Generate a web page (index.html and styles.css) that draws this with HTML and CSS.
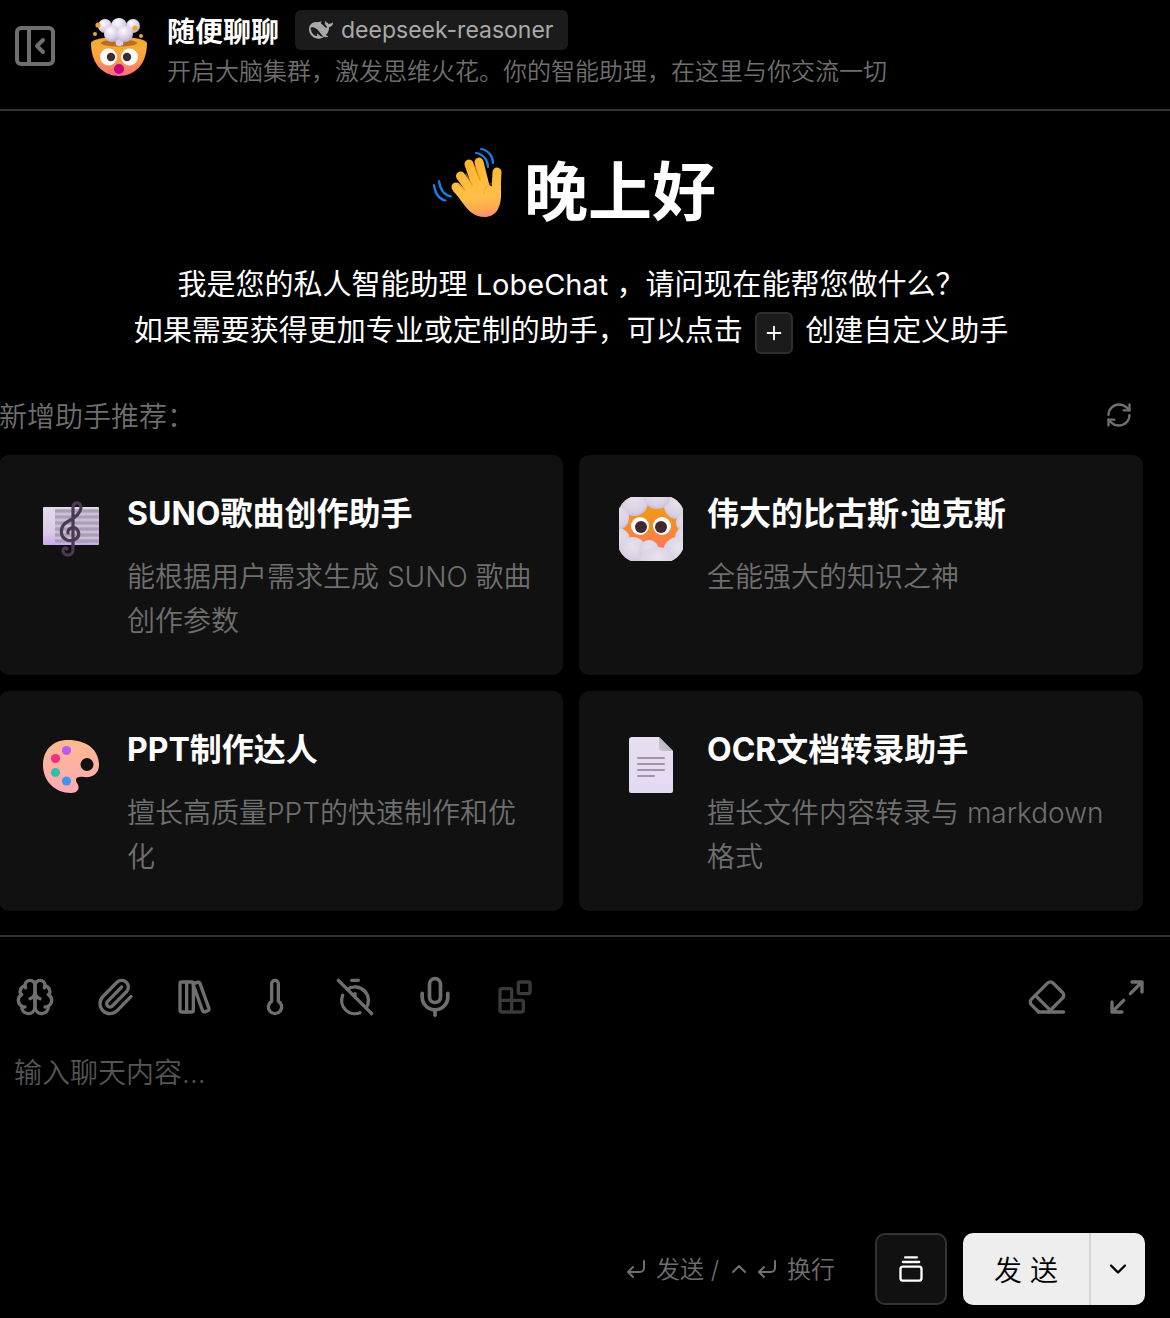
FILE: index.html
```html
<!DOCTYPE html>
<html lang="zh-CN">
<head>
<meta charset="utf-8">
<meta name="viewport" content="width=device-width, initial-scale=1">
<title>随便聊聊 - LobeChat</title>
<link rel="stylesheet" href="styles.css">
</head>
<body>
<div class="app">
  <header class="topbar">
    <button class="icon-btn topbar-toggle" type="button" aria-label="收起侧边栏">
      <svg class="icon icon-xl" viewBox="0 0 24 24"><rect x="3" y="3" width="18" height="18" rx="2"/><path d="M9 3v18"/><path d="m16 15-3-3 3-3"/></svg>
    </button>
    <svg class="topbar-avatar" viewBox="0 0 60 60" aria-hidden="true">
      <defs>
        <linearGradient id="face" x1="0" y1="0" x2="0" y2="1"><stop offset="0" stop-color="#f6b23c"/><stop offset=".5" stop-color="#ff9d3d"/><stop offset="1" stop-color="#fb6a8c"/></linearGradient>
        <radialGradient id="puff" cx=".4" cy=".3" r=".75"><stop offset="0" stop-color="#fdfbff"/><stop offset=".6" stop-color="#dcd2e6"/><stop offset="1" stop-color="#b7a3c6"/></radialGradient>
      </defs>
      <path d="M2 26c0 21 12 33 28 33s28-12 28-33z" fill="url(#face)"/>
      <ellipse cx="30" cy="26" rx="28" ry="6" fill="#f0ab35"/>
      <ellipse cx="30" cy="26" rx="18" ry="3.500" fill="#b76d27"/>
      <path d="M25 15h11l-2 13q-4 2-7 0z" fill="#dccfe3"/>
      <circle cx="16" cy="9" r="7" fill="url(#puff)"/><circle cx="44" cy="9" r="7" fill="url(#puff)"/><circle cx="30" cy="9" r="8" fill="url(#puff)"/><circle cx="23" cy="17" r="8" fill="url(#puff)"/><circle cx="36" cy="17" r="8" fill="url(#puff)"/>
      <g fill="#f3a42f"><circle cx="9" cy="8" r="2.600"/><circle cx="6" cy="17" r="2"/><circle cx="46" cy="11" r="2.600"/><circle cx="52" cy="19" r="2"/></g>
      <circle cx="19.500" cy="40" r="8.500" fill="#fff"/><circle cx="40.500" cy="40" r="8.500" fill="#fff"/>
      <circle cx="22" cy="40" r="4.200" fill="#402a32"/><circle cx="38" cy="40" r="4.200" fill="#402a32"/>
      <circle cx="30" cy="52" r="5" fill="#c4047e"/>
    </svg>
    <div class="topbar-text">
      <div class="topbar-row">
        <h2 class="topbar-title">随便聊聊</h2>
        <button class="tag" type="button">
          <svg class="tag-icon" viewBox="0 0 24 24" aria-hidden="true"><path fill-rule="evenodd" d="M23.748 4.482c-.254-.124-.364.113-.512.234-.051.039-.094.09-.137.136-.372.397-.806.657-1.373.626-.829-.046-1.537.214-2.163.848-.133-.782-.575-1.248-1.247-1.548-.352-.156-.708-.311-.955-.65-.172-.241-.219-.51-.305-.774-.055-.16-.11-.323-.293-.35-.2-.031-.278.136-.356.276-.313.572-.434 1.202-.422 1.84.027 1.436.633 2.58 1.838 3.393.137.093.172.187.129.323-.082.28-.18.552-.266.833-.055.179-.137.217-.329.14a5.526 5.526 0 01-1.736-1.18c-.857-.828-1.631-1.742-2.597-2.458a11.365 11.365 0 00-.689-.471c-.985-.957.13-1.743.388-1.836.27-.098.093-.432-.779-.428-.872.004-1.67.295-2.687.684a3.055 3.055 0 01-.465.137 9.597 9.597 0 00-2.883-.102c-1.885.21-3.39 1.102-4.497 2.623C.082 8.606-.231 10.684.152 12.85c.403 2.284 1.569 4.175 3.36 5.653 1.858 1.533 3.997 2.284 6.438 2.14 1.482-.085 3.133-.284 4.994-1.86.47.234.962.327 1.78.397.63.059 1.236-.03 1.705-.128.735-.156.684-.837.419-.961-2.155-1.004-1.682-.595-2.113-.926 1.096-1.296 2.746-2.642 3.392-7.003.05-.347.007-.565 0-.845-.004-.17.035-.237.23-.256a4.173 4.173 0 001.545-.475c1.396-.763 1.96-2.015 2.093-3.517.02-.23-.004-.467-.247-.588zM11.581 18c-2.089-1.642-3.102-2.183-3.52-2.16-.392.024-.321.471-.235.763.09.288.207.486.371.739.114.167.192.416-.113.603-.673.416-1.842-.14-1.897-.167-1.361-.802-2.5-1.86-3.301-3.307-.774-1.393-1.224-2.887-1.298-4.482-.02-.386.093-.522.477-.592a4.696 4.696 0 011.529-.039c2.132.312 3.946 1.265 5.468 2.774.868.86 1.525 1.887 2.202 2.891.72 1.066 1.494 2.082 2.48 2.914.348.292.625.514.891.677-.802.09-2.14.11-3.054-.614z"/></svg>
          <span>deepseek-reasoner</span>
        </button>
      </div>
      <p class="topbar-desc">开启大脑集群，激发思维火花。你的智能助理，在这里与你交流一切</p>
    </div>
  </header>

  <main class="welcome">
    <h1 class="greeting">
      <svg class="greeting-hand" viewBox="0 0 72 72" aria-hidden="true">
        <defs><linearGradient id="hand" gradientUnits="userSpaceOnUse" x1="40" y1="10" x2="48" y2="72"><stop offset="0" stop-color="#ffb52b"/><stop offset=".65" stop-color="#ffc04a"/><stop offset=".85" stop-color="#ffa84e"/><stop offset="1" stop-color="#f5828a"/></linearGradient></defs>
        <path d="M21 44c8 8 12 17 19 22 8 6 21 6 26-4 4-8 3-15 3-24l-7 2c-5-1-8-5-12-8z" fill="url(#hand)"/>
        <g fill="none" stroke="url(#hand)" stroke-width="9" stroke-linecap="round"><path d="m24 40 14 14M28.500 29 44 50M37 17l10 29M47 15l7 28M65 25l-1 20"/></g>
        <path d="m27 37 6 6M34 27l6 11M43 19l5 14" fill="none" stroke="#e58f20" stroke-width="1.500" stroke-linecap="round" opacity=".7"/>
        <path d="M60 36c-5 2-8 6-8 11" fill="none" stroke="#ed952c" stroke-width="1.500" stroke-linecap="round" opacity=".35"/>
        <path d="M44 6c7 1 12 7 12 14M49 2c7 1 12 7 12 14M7 34c1 8 5 14 12 15.500M2 38c1 8 5 14 11.500 15.500" fill="none" stroke="#1680e5" stroke-width="2.200" stroke-linecap="round"/>
      </svg>
      <span>晚上好</span>
    </h1>
    <p class="intro">我是您的私人智能助理 LobeChat ，请问现在能帮您做什么？<br>如果需要获得更加专业或定制的助手，可以点击 <kbd class="key"><svg class="icon key-icon" viewBox="0 0 24 24" role="img" aria-label="加号"><path d="M5 12h14M12 5v14"/></svg></kbd> 创建自定义助手</p>

    <section class="suggest">
      <div class="suggest-head">
        <h2 class="suggest-title">新增助手推荐：</h2>
        <button class="icon-btn" type="button" aria-label="换一批">
          <svg class="icon icon-md" viewBox="0 0 24 24"><path d="M3 12a9 9 0 0 1 9-9 9.750 9.750 0 0 1 6.740 2.740L21 8"/><path d="M21 3v5h-5"/><path d="M21 12a9 9 0 0 1-9 9 9.750 9.750 0 0 1-6.740-2.740L3 16"/><path d="M8 16H3v5"/></svg>
        </button>
      </div>
      <div class="cards">
        <a class="card" href="#suno">
          <svg class="card-avatar" viewBox="0 0 64 64" aria-hidden="true">
            <defs><linearGradient id="sheet" x1="0" y1="0" x2="0" y2="1"><stop offset="0" stop-color="#e3dbeb"/><stop offset=".7" stop-color="#d9c9e8"/><stop offset="1" stop-color="#cba9ec"/></linearGradient></defs>
            <rect x="4" y="10" width="56" height="38" rx="1" fill="url(#sheet)"/>
            <path d="M16 14h44M16 20h44M16 26h44M16 32h44M16 38h44M16 44h44" stroke="#aaa0b5" stroke-width="3.500"/>
            <path d="M16 17h44M16 23h44M16 29h44M16 35h44M16 41h44" stroke="#cbc0d5" stroke-width="2"/>
            <path d="M29 36c-1-5 7-8 10-2 3 7-5 11-11 9-8-3-7-14 0-18 8-4 14-9 14-15 0-5-7-6-8 0v43c0 6-9 7-10 1 0-3 2-4 4-2" fill="none" stroke="#493951" stroke-width="3.200" stroke-linecap="round"/>
          </svg>
          <div class="card-body"><h3 class="card-title">SUNO歌曲创作助手</h3><p class="card-desc">能根据用户需求生成 SUNO 歌曲创作参数</p></div>
        </a>
        <a class="card" href="#bigus">
          <svg class="card-avatar" viewBox="0 0 64 64" aria-hidden="true">
            <defs>
              <clipPath id="octagon"><path d="M12 0h40c5 2 10 7 12 12v40c-2 5-7 10-12 12H12C7 62 2 57 0 52V12C2 7 7 2 12 0z"/></clipPath>
              <linearGradient id="sky" x1="0" y1="0" x2="0" y2="1"><stop offset="0" stop-color="#eda016"/><stop offset=".5" stop-color="#f48b2c"/><stop offset=".8" stop-color="#ff7561"/></linearGradient>
              <radialGradient id="cloud" cx=".5" cy=".35" r=".75"><stop offset="0" stop-color="#e6e2ec"/><stop offset=".65" stop-color="#d9d1e3"/><stop offset="1" stop-color="#c2aedb"/></radialGradient>
            </defs>
            <g clip-path="url(#octagon)">
              <rect width="64" height="64" fill="url(#sky)"/>
              <g fill="url(#cloud)"><circle cx="15" cy="5" r="14"/><circle cx="-2" cy="21" r="12"/><circle cx="58" cy="9" r="13"/><ellipse cx="38" cy="0" rx="13" ry="12"/><circle cx="66" cy="26" r="9"/><circle cx="66" cy="40" r="10"/><circle cx="-1" cy="43" r="12"/><circle cx="14" cy="53" r="13"/><circle cx="30" cy="53" r="10"/><circle cx="59" cy="55" r="15"/><ellipse cx="38" cy="64" rx="18" ry="14"/></g>
            </g>
            <circle cx="21" cy="29" r="9" fill="#fff"/><circle cx="43" cy="29" r="9" fill="#fff"/><circle cx="22" cy="30" r="6" fill="#402a32"/><circle cx="42" cy="30" r="6" fill="#402a32"/>
          </svg>
          <div class="card-body"><h3 class="card-title">伟大的比古斯·迪克斯</h3><p class="card-desc">全能强大的知识之神</p></div>
        </a>
        <a class="card" href="#ppt">
          <svg class="card-avatar" viewBox="0 0 64 64" aria-hidden="true">
            <defs><linearGradient id="wood" x1="0" y1="0" x2="0" y2="1"><stop offset="0" stop-color="#fdb98f"/><stop offset="1" stop-color="#ffa9b6"/></linearGradient></defs>
            <path fill-rule="evenodd" d="M29 7C13 7 4 18 4 32c0 16 12 28 28 28 8 0 9-6 6-10-3-5 1-7 7-6 9 1 15-4 15-12C60 17 48 7 29 7zM48 25a6.500 6.500 0 1 1 0 13 6.500 6.500 0 0 1 0-13z" fill="url(#wood)"/>
            <circle cx="27.500" cy="17.500" r="4.600" fill="#b75bfa"/><circle cx="16.500" cy="25.500" r="4.600" fill="#f22e87"/><circle cx="16.500" cy="39.500" r="4.600" fill="#36bdaa"/><circle cx="27.500" cy="48" r="4.600" fill="#3e94f3"/>
          </svg>
          <div class="card-body"><h3 class="card-title">PPT制作达人</h3><p class="card-desc">擅长高质量PPT的快速制作和优化</p></div>
        </a>
        <a class="card" href="#ocr">
          <svg class="card-avatar" viewBox="0 0 64 64" aria-hidden="true">
            <defs>
              <linearGradient id="paper" x1="0" y1="0" x2="0" y2="1"><stop offset="0" stop-color="#e7dfef"/><stop offset="1" stop-color="#e4d9f3"/></linearGradient>
              <linearGradient id="fold" x1="0" y1="1" x2="1" y2="0"><stop offset="0" stop-color="#d0c9d5"/><stop offset="1" stop-color="#aaa2b0"/></linearGradient>
            </defs>
            <path d="M13 4h27l14 14v40a2 2 0 0 1-2 2H12a2 2 0 0 1-2-2V7q0-3 3-3z" fill="url(#paper)"/>
            <path d="M40 4v11q0 3 3 3h11z" fill="url(#fold)"/>
            <path d="M19 25h26M19 31h26M19 37h26M19 43h16" stroke="#a195a9" stroke-width="2" stroke-linecap="round"/>
          </svg>
          <div class="card-body"><h3 class="card-title">OCR文档转录助手</h3><p class="card-desc">擅长文件内容转录与 markdown 格式</p></div>
        </a>
      </div>
    </section>
  </main>

  <form class="composer">
    <div class="toolbar">
      <button class="icon-btn" type="button" aria-label="模型"><svg class="icon icon-lg" viewBox="0 0 24 24"><path d="M12 5a3 3 0 1 0-5.997.125 4 4 0 0 0-2.526 5.770 4 4 0 0 0 .556 6.588A4 4 0 1 0 12 18Z"/><path d="M12 5a3 3 0 1 1 5.997.125 4 4 0 0 1 2.526 5.770 4 4 0 0 1-.556 6.588A4 4 0 1 1 12 18Z"/><path d="M15 13a4.500 4.500 0 0 1-3-4 4.500 4.500 0 0 1-3 4"/><path d="M17.599 6.500a3 3 0 0 0 .399-1.375"/><path d="M6.003 5.125A3 3 0 0 0 6.401 6.500"/><path d="M3.477 10.896a4 4 0 0 1 .585-.396"/><path d="M19.938 10.500a4 4 0 0 1 .585.396"/><path d="M6 18a4 4 0 0 1-1.967-.516"/><path d="M19.967 17.484A4 4 0 0 1 18 18"/></svg></button>
      <button class="icon-btn" type="button" aria-label="上传附件"><svg class="icon icon-lg" viewBox="0 0 24 24"><path d="m16 6-8.414 8.586a2 2 0 0 0 2.829 2.829l8.414-8.586a4 4 0 1 0-5.657-5.657l-8.379 8.551a6 6 0 1 0 8.485 8.485l8.379-8.551"/></svg></button>
      <button class="icon-btn" type="button" aria-label="知识库"><svg class="icon icon-lg" viewBox="0 0 24 24"><rect width="8" height="18" x="3" y="3" rx="1"/><path d="M7 3v18"/><path d="M20.400 18.900c.2.500-.1 1.100-.6 1.300l-1.900.7c-.5.2-1.100-.1-1.300-.6L11.100 5.100c-.2-.5.1-1.100.6-1.300l1.900-.7c.5-.2 1.100.1 1.300.6Z"/></svg></button>
      <button class="icon-btn" type="button" aria-label="温度"><svg class="icon icon-lg" viewBox="0 0 24 24"><path d="M14 4v10.540a4 4 0 1 1-4 0V4a2 2 0 0 1 4 0Z"/></svg></button>
      <button class="icon-btn" type="button" aria-label="历史消息数"><svg class="icon icon-lg" viewBox="0 0 24 24"><path d="M10 2h4"/><path d="M4.600 11a8 8 0 0 0 1.700 8.700 8 8 0 0 0 8.700 1.700"/><path d="M7.400 7.400a8 8 0 0 1 10.300 1 8 8 0 0 1 .9 10.200"/><path d="m2 2 20 20"/><path d="M12 12v-2"/></svg></button>
      <button class="icon-btn" type="button" aria-label="语音输入"><svg class="icon icon-mic" viewBox="0 0 24 24"><rect x="9" y="2" width="6" height="13" rx="3"/><path d="M19 10v2a7 7 0 0 1-14 0v-2"/><path d="M12 19v3"/></svg></button>
      <button class="icon-btn icon-off" type="button" aria-label="插件" disabled><svg class="icon icon-lg" viewBox="0 0 24 24"><rect width="7" height="7" x="14" y="3" rx="1"/><path d="M10 21V8a1 1 0 0 0-1-1H4a1 1 0 0 0-1 1v12a1 1 0 0 0 1 1h12a1 1 0 0 0 1-1v-5a1 1 0 0 0-1-1H3"/></svg></button>
      <span class="spacer"></span>
      <button class="icon-btn" type="button" aria-label="清空"><svg class="icon icon-lg" viewBox="0 0 24 24"><path d="m7 21-4.300-4.300c-1-1-1-2.500 0-3.400l9.600-9.600c1-1 2.500-1 3.400 0l5.600 5.600c1 1 1 2.500 0 3.400L13 21"/><path d="M22 21H7"/><path d="m5 11 9 9"/></svg></button>
      <button class="icon-btn" type="button" aria-label="展开"><svg class="icon icon-lg" viewBox="0 0 24 24"><path d="M15 3h6v6M9 21H3v-6M21 3l-7 7M3 21l7-7"/></svg></button>
    </div>
    <textarea class="message" aria-label="输入聊天内容" placeholder="输入聊天内容..."></textarea>
    <div class="actions">
      <div class="hints">
        <svg class="icon icon-sm" viewBox="0 0 24 24" aria-hidden="true"><path d="m9 10-5 5 5 5"/><path d="M20 4v7a4 4 0 0 1-4 4H4"/></svg>
        <span class="hint">发送 /</span>
        <span class="combo"><svg class="icon icon-sm" viewBox="0 0 24 24" aria-hidden="true"><path d="m18 15-6-6-6 6"/></svg><svg class="icon icon-sm" viewBox="0 0 24 24" aria-hidden="true"><path d="m9 10-5 5 5 5"/><path d="M20 4v7a4 4 0 0 1-4 4H4"/></svg></span>
        <span class="hint">换行</span>
      </div>
      <button class="topic" type="button" aria-label="保存为话题"><svg class="icon icon-md" viewBox="0 0 24 24"><path d="M7 2h10"/><path d="M5 6h14"/><rect width="18" height="12" x="3" y="10" rx="2"/></svg></button>
      <div class="send">
        <button class="send-main" type="button">发 送</button>
        <button class="send-more" type="button" aria-label="更多发送选项"><svg class="icon icon-md" viewBox="0 0 24 24"><path d="m6 9 6 6 6-6"/></svg></button>
      </div>
    </div>
  </form>
</div>
</body>
</html>
```
FILE: styles.css
```css
* { box-sizing: border-box; }

body {
  margin: 0;
  background: #000;
  color: #fff;
  font-family: Inter, "Noto Sans CJK SC", sans-serif;
  font-size: 28px;
}

h1, h2, h3, p { margin: 0; }

button {
  padding: 0;
  border: 0;
  background: none;
  color: inherit;
  font: inherit;
  cursor: pointer;
}

.app {
  display: flex;
  flex-direction: column;
  min-height: 100vh;
}

.icon {
  display: block;
  flex: none;
  fill: none;
  stroke: currentColor;
  stroke-width: 2;
  stroke-linecap: round;
  stroke-linejoin: round;
}
.icon-sm { width: 24px; height: 24px; }
.icon-md { width: 28px; height: 28px; }
.icon-lg { width: 40px; height: 40px; }
.icon-mic { width: 44px; height: 44px; }
.icon-xl { width: 48px; height: 48px; }

.icon-btn {
  display: flex;
  align-items: center;
  justify-content: center;
  color: #6f6f6f;
}
.icon-off { color: #3a3a3a; cursor: default; }

/* Top bar */
.topbar {
  display: flex;
  align-items: flex-start;
  padding: 10px 11px 21px;
  border-bottom: 2px solid #333;
}
.topbar-toggle { margin-top: 12px; }
.topbar-avatar {
  flex: none;
  width: 60px;
  height: 60px;
  margin: 7px 18px 0 30px;
}
.topbar-row {
  display: flex;
  align-items: flex-start;
  gap: 16px;
  height: 40px;
  margin-bottom: 6px;
}
.topbar-title {
  font-size: 28px;
  font-weight: 700;
  line-height: 44px;
}
.tag {
  display: flex;
  align-items: center;
  gap: 8px;
  height: 40px;
  padding: 0 14px;
  border-radius: 6px;
  background: #1b1b1b;
  color: #aaa;
  font-size: 23px;
}
.tag-icon { width: 24px; height: 24px; fill: currentColor; }
.topbar-desc {
  color: #6f6f6f;
  font-size: 24px;
  font-weight: 350;
  line-height: 32px;
}

/* Welcome area */
.welcome {
  margin-left: -1px;
  padding: 36px 27px 24px 0;
}
.greeting {
  display: flex;
  justify-content: center;
  gap: 20px;
  padding-left: 6px;
  font-size: 64px;
  font-weight: 700;
  line-height: 90px;
}
.greeting-hand { width: 72px; height: 72px; }
.intro {
  margin-top: 25px;
  font-size: 29px;
  line-height: 46px;
  text-align: center;
}
.key {
  display: inline-flex;
  align-items: center;
  justify-content: center;
  width: 38px;
  height: 42px;
  margin: 0 4px;
  border: 2px solid #2e2e2e;
  border-radius: 6px;
  background: #1b1b1b;
  vertical-align: middle;
}
.key-icon { width: 22px; height: 22px; }

.suggest { margin-top: 41px; }
.suggest-head {
  display: flex;
  align-items: center;
  justify-content: space-between;
  height: 40px;
  margin-bottom: 20px;
  padding-right: 10px;
  color: #6f6f6f;
}
.suggest-title { font-size: 28px; font-weight: 350; }

.cards {
  display: grid;
  grid-template-columns: repeat(2, minmax(0, 1fr));
  gap: 16px;
}
.card {
  display: flex;
  align-items: flex-start;
  gap: 24px;
  min-height: 220px;
  padding: 36px 28px 32px 40px;
  border-radius: 10px;
  background: #111;
  color: #fff;
  text-decoration: none;
}
.card-avatar {
  flex: none;
  width: 64px;
  height: 64px;
  margin-top: 6px;
}
.card-body { flex: 1; min-width: 0; }
.card-title {
  margin-bottom: 18px;
  font-size: 32px;
  font-weight: 700;
  line-height: 46px;
}
.card-desc {
  color: #6f6f6f;
  font-weight: 350;
  line-height: 44px;
}

/* Composer */
.composer {
  display: flex;
  flex: 1;
  flex-direction: column;
  border-top: 2px solid #333;
}
.toolbar {
  display: flex;
  align-items: center;
  gap: 40px;
  height: 120px;
  padding: 0 23px 0 15px;
}
.toolbar .icon-btn { width: 40px; height: 40px; }
.spacer { flex: 1; }
.message {
  flex: 1;
  min-height: 88px;
  padding: 0 14px;
  border: 0;
  outline: 0;
  resize: none;
  background: transparent;
  color: #fff;
  font: inherit;
  font-weight: 350;
  line-height: 32px;
}
.message::placeholder { color: #555; opacity: 1; }
.actions {
  display: flex;
  align-items: center;
  justify-content: flex-end;
  gap: 16px;
  padding: 0 25px 13px;
}
.hints {
  display: flex;
  align-items: center;
  gap: 8px;
  margin-right: 24px;
  color: #6f6f6f;
  font-size: 24px;
  font-weight: 350;
}
.hint { padding-bottom: 4px; }
.combo { display: flex; gap: 4px; }
.topic {
  display: flex;
  align-items: center;
  justify-content: center;
  width: 72px;
  height: 72px;
  border: 2px solid #333;
  border-radius: 10px;
  background: #111;
}
.send {
  display: flex;
  height: 72px;
  border-radius: 10px;
  background: #eee;
  color: #000;
}
.send-main { width: 126px; font-weight: 350; }
.send-more {
  display: flex;
  align-items: center;
  justify-content: center;
  width: 56px;
  border-left: 2px solid #d4d4d4;
}
```
